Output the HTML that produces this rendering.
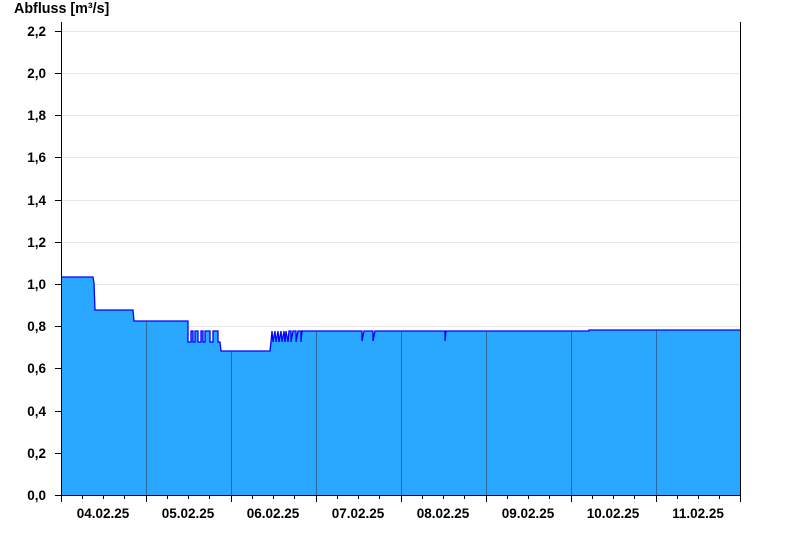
<!DOCTYPE html>
<html><head><meta charset="utf-8"><style>
body{margin:0;background:#fff;width:800px;height:550px;overflow:hidden}
svg text{font-family:"Liberation Sans",sans-serif;font-weight:bold;font-size:13.5px;fill:#000}
</style></head><body>
<svg width="800" height="550" xmlns="http://www.w3.org/2000/svg">
<text x="14" y="13" style="font-size:14.3px">Abfluss [m³/s]</text>
<g stroke="#e8e8e8" stroke-width="1">
<line x1="61" x2="740" y1="31.5" y2="31.5"/><line x1="61" x2="740" y1="73.5" y2="73.5"/>
<line x1="61" x2="740" y1="115.5" y2="115.5"/><line x1="61" x2="740" y1="157.5" y2="157.5"/>
<line x1="61" x2="740" y1="200.5" y2="200.5"/><line x1="61" x2="740" y1="242.5" y2="242.5"/>
<line x1="61" x2="740" y1="284.5" y2="284.5"/><line x1="61" x2="740" y1="326.5" y2="326.5"/>
<line x1="61" x2="740" y1="368.5" y2="368.5"/><line x1="61" x2="740" y1="411.5" y2="411.5"/>
<line x1="61" x2="740" y1="453.5" y2="453.5"/>
</g>
<path d="M61,277 L93,277 L94,283 L95,310 L133,310 L134,321 L188,321 L188,342 L191,342 L191,331 L193,331 L193,342 L195,342 L195,331 L198,331 L198,342 L201,342 L201,331 L203,331 L203,342 L205,342 L205,331 L210,331 L210,342 L213,342 L213,331 L218,331 L218,342 L220,342 L221,351 L270,351 L271,342 L272,331 L273,342 L275,331 L276,342 L278,331 L279,342 L281,331 L282,342 L284,331 L285,342 L286,331 L288,342 L289,331 L291,331 L291,342 L293,331 L296,331 L296,342 L298,331 L301,331 L301,342 L302,331 L362,331 L362,341 L364,331 L373,331 L373,341 L375,331 L445,331 L445,341 L446,331 L589,331 L589,330 L740,330 L740,495 L61,495 Z" fill="#2aa8ff"/>
<g stroke="#2a6a9a" stroke-width="1">
<line x1="146.5" x2="146.5" y1="321" y2="495"/><line x1="231.5" x2="231.5" y1="351" y2="495"/>
<line x1="316.5" x2="316.5" y1="331" y2="495"/><line x1="401.5" x2="401.5" y1="331" y2="495"/>
<line x1="486.5" x2="486.5" y1="331" y2="495"/><line x1="571.5" x2="571.5" y1="331" y2="495"/>
<line x1="656.5" x2="656.5" y1="330" y2="495"/>
</g>
<path d="M61,277 L93,277 L94,283 L95,310 L133,310 L134,321 L188,321 L188,342 L191,342 L191,331 L193,331 L193,342 L195,342 L195,331 L198,331 L198,342 L201,342 L201,331 L203,331 L203,342 L205,342 L205,331 L210,331 L210,342 L213,342 L213,331 L218,331 L218,342 L220,342 L221,351 L270,351 L271,342 L272,331 L273,342 L275,331 L276,342 L278,331 L279,342 L281,331 L282,342 L284,331 L285,342 L286,331 L288,342 L289,331 L291,331 L291,342 L293,331 L296,331 L296,342 L298,331 L301,331 L301,342 L302,331 L362,331 L362,341 L364,331 L373,331 L373,341 L375,331 L445,331 L445,341 L446,331 L589,331 L589,330 L740,330" fill="none" stroke="#0000ff" stroke-width="1.3"/>
<g stroke="#000" stroke-width="1">
<line x1="61.5" x2="61.5" y1="22" y2="495"/><line x1="740.5" x2="740.5" y1="22" y2="495"/>
<line x1="55" x2="741" y1="495.5" y2="495.5"/>
<path d="M55,31.5h6M55,73.5h6M55,115.5h6M55,157.5h6M55,200.5h6M55,242.5h6M55,284.5h6M55,326.5h6M55,368.5h6M55,411.5h6M55,453.5h6"/>
<path d="M61.5,495v7M146.5,495v7M231.5,495v7M316.5,495v7M401.5,495v7M486.5,495v7M571.5,495v7M656.5,495v7M740.5,495v7"/>
<path d="M82.5,495v4M103.5,495v4M124.5,495v4M167.5,495v4M188.5,495v4M209.5,495v4M252.5,495v4M273.5,495v4M294.5,495v4M337.5,495v4M358.5,495v4M379.5,495v4M422.5,495v4M443.5,495v4M464.5,495v4M507.5,495v4M528.5,495v4M549.5,495v4M592.5,495v4M613.5,495v4M634.5,495v4M677.5,495v4M698.5,495v4M719.5,495v4"/>
</g>
<g text-anchor="end">
<text x="46" y="36">2,2</text><text x="46" y="78">2,0</text><text x="46" y="120">1,8</text>
<text x="46" y="162">1,6</text><text x="46" y="205">1,4</text><text x="46" y="247">1,2</text>
<text x="46" y="289">1,0</text><text x="46" y="331">0,8</text><text x="46" y="373">0,6</text>
<text x="46" y="416">0,4</text><text x="46" y="458">0,2</text><text x="46" y="500">0,0</text>
</g>
<g text-anchor="middle">
<text x="103" y="518">04.02.25</text><text x="188" y="518">05.02.25</text><text x="273" y="518">06.02.25</text>
<text x="358" y="518">07.02.25</text><text x="443" y="518">08.02.25</text><text x="528" y="518">09.02.25</text>
<text x="613" y="518">10.02.25</text><text x="698" y="518">11.02.25</text>
</g>
</svg>
</body></html>
